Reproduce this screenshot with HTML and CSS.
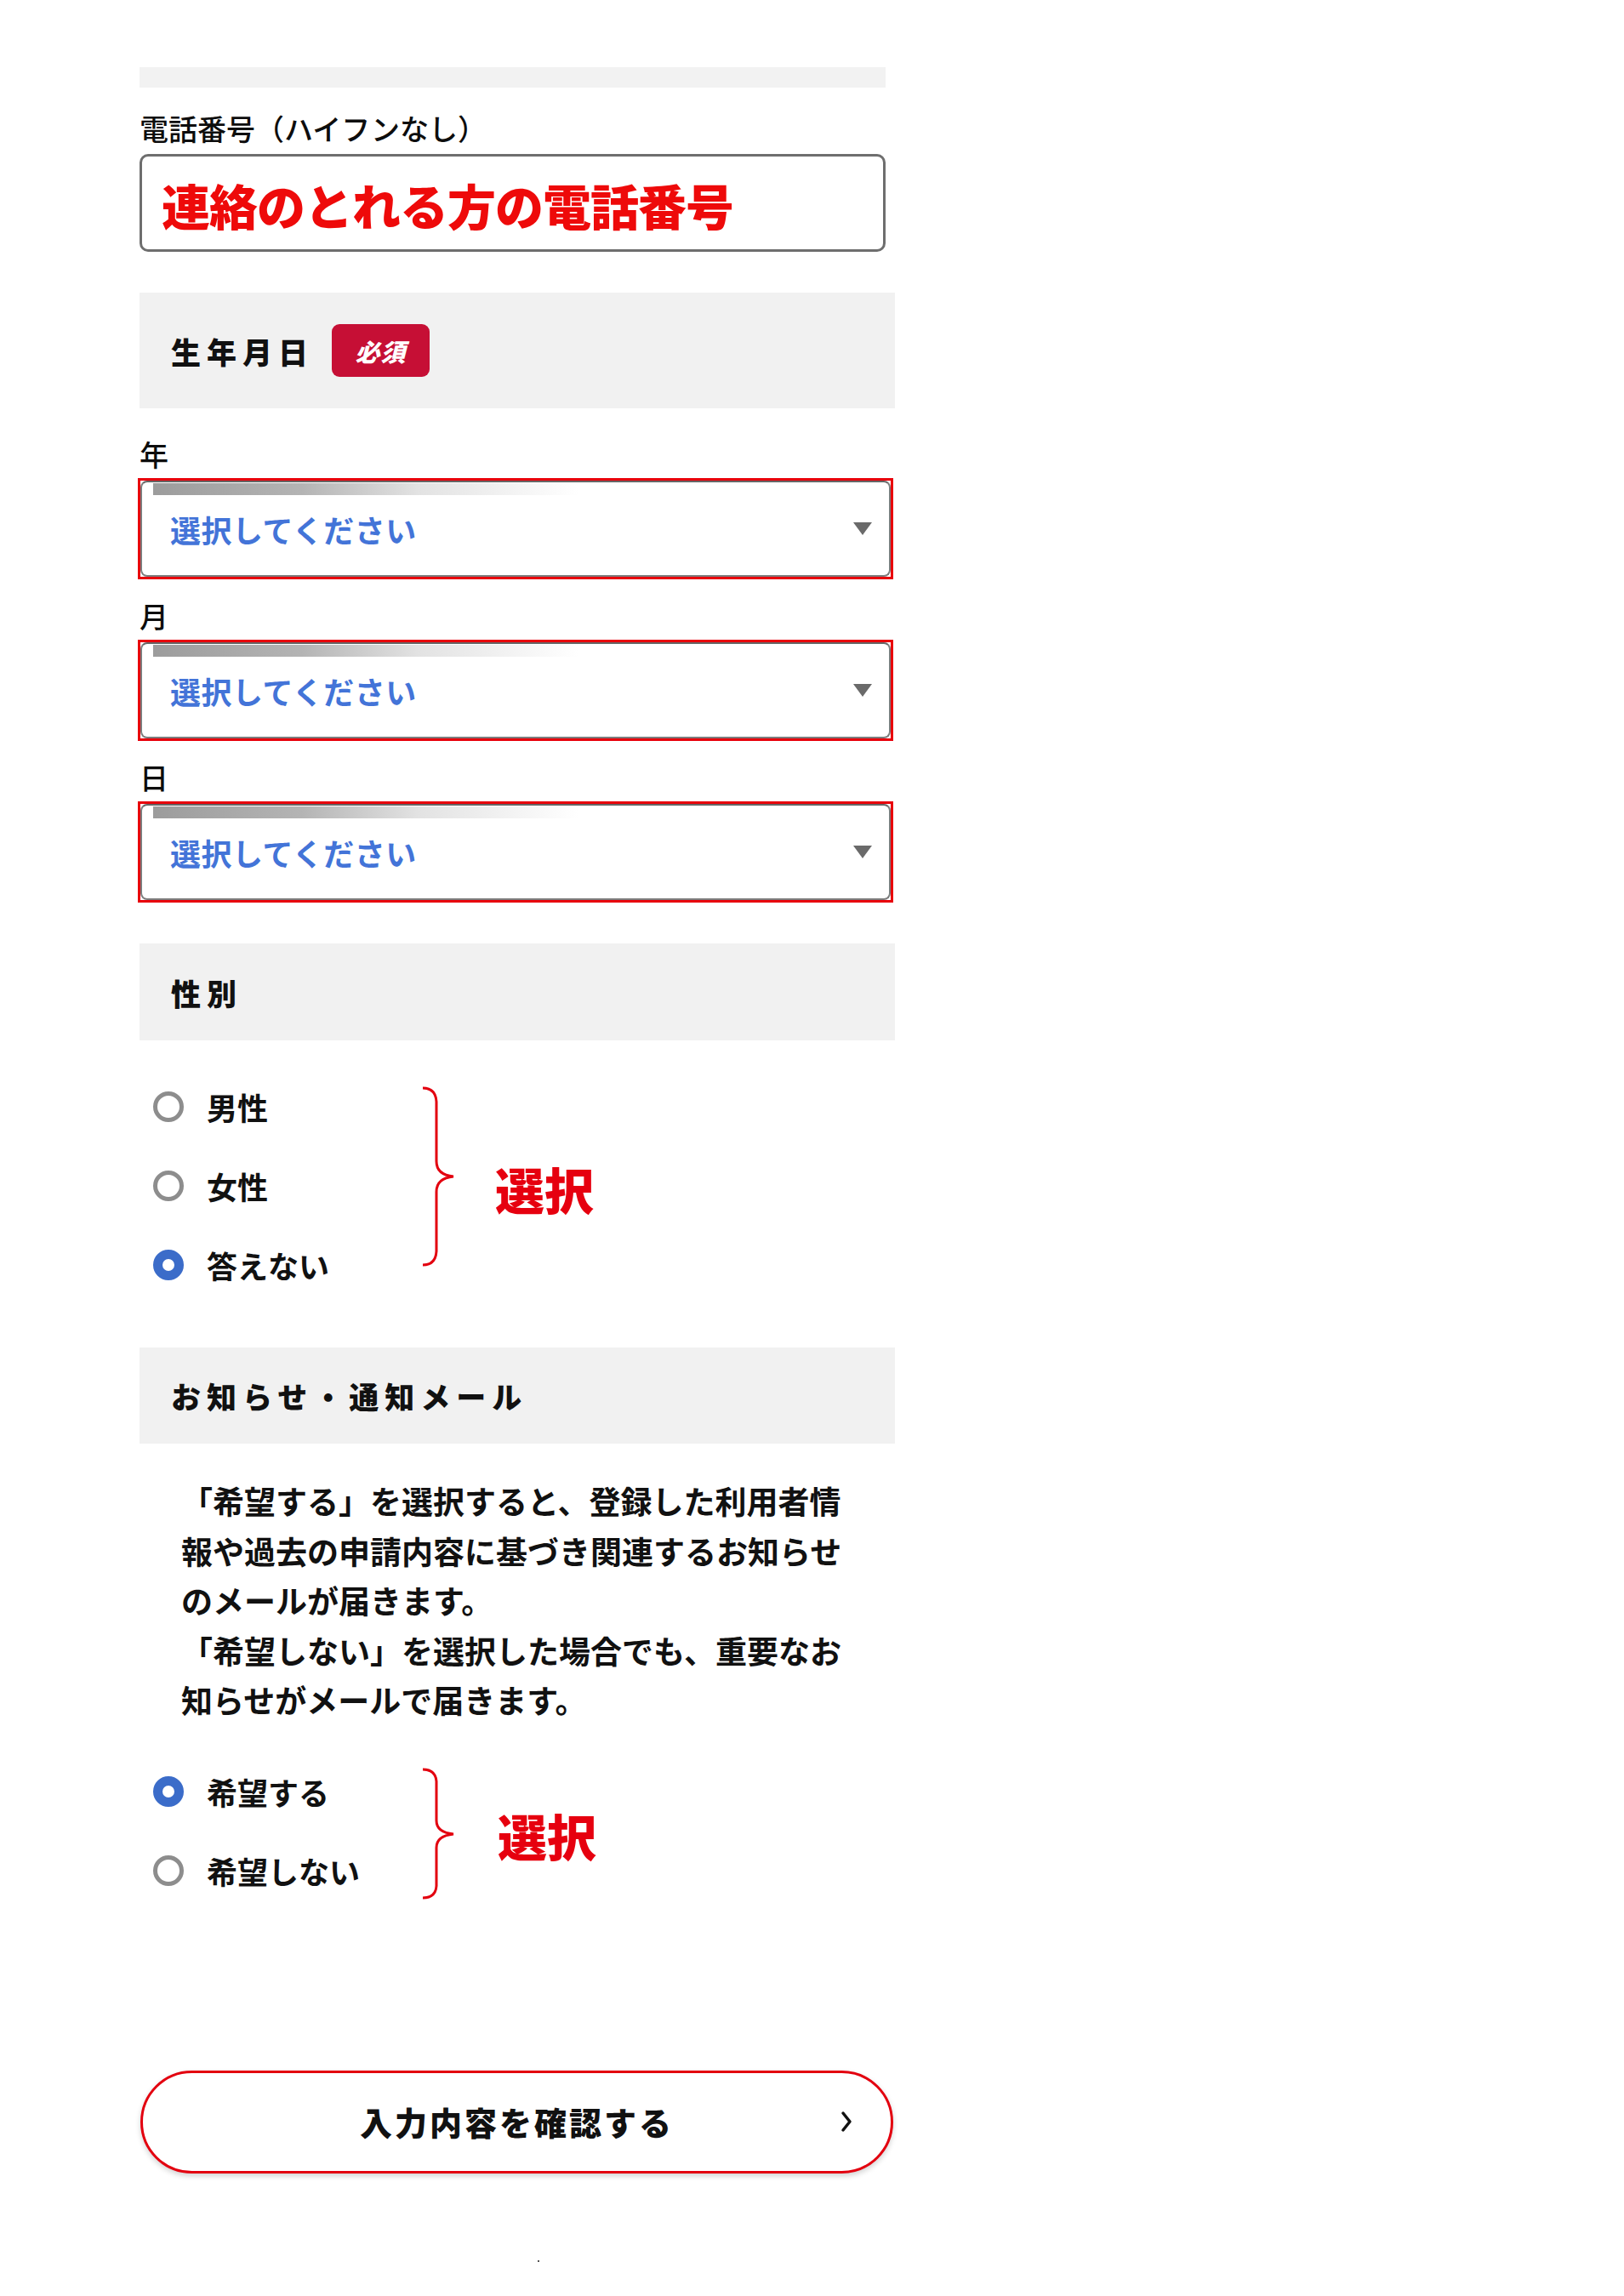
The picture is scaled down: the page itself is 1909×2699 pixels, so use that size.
FILE: index.html
```html
<!DOCTYPE html>
<html lang="ja">
<head>
<meta charset="utf-8">
<title>会員登録</title>
<link rel="stylesheet" href="styles.css">
</head>
<body>
<main class="form">
  <div class="topbar"></div>

  <div class="field-label phone-label">電話番号（ハイフンなし）</div>
  <div class="phone-input"><span class="note-red">連絡のとれる方の電話番号</span></div>

  <div class="section-head head-birth">
    <h2 class="head-title">生年月日</h2>
    <span class="badge">必須</span>
  </div>

  <div class="select-field first">
    <div class="field-label">年</div>
    <div class="select-outline">
      <div class="select">
        <span class="strip"></span>
        <div class="select-row"><span class="placeholder">選択してください</span><span class="arrow"></span></div>
      </div>
    </div>
  </div>
  <div class="select-field">
    <div class="field-label">月</div>
    <div class="select-outline">
      <div class="select">
        <span class="strip"></span>
        <div class="select-row"><span class="placeholder">選択してください</span><span class="arrow"></span></div>
      </div>
    </div>
  </div>
  <div class="select-field">
    <div class="field-label">日</div>
    <div class="select-outline">
      <div class="select">
        <span class="strip"></span>
        <div class="select-row"><span class="placeholder">選択してください</span><span class="arrow"></span></div>
      </div>
    </div>
  </div>

  <div class="section-head head-gender">
    <h2 class="head-title">性別</h2>
  </div>

  <div class="radio-group gender">
    <div class="radio"><span class="circle"></span><span class="radio-text">男性</span></div>
    <div class="radio"><span class="circle"></span><span class="radio-text">女性</span></div>
    <div class="radio"><span class="circle checked"></span><span class="radio-text">答えない</span></div>
    <svg class="brace brace-gender" viewBox="0 0 40 212" preserveAspectRatio="none" aria-hidden="true">
      <path d="M1 2 Q16 2 17 18 L17 88 Q17 104 37 106 Q17 108 17 124 L17 194 Q16 210 1 210" />
    </svg>
    <span class="annot annot-gender">選択</span>
  </div>

  <div class="section-head head-notice">
    <h2 class="head-title">お知らせ・通知メール</h2>
  </div>

  <p class="notice">「希望する」を選択すると、登録した利用者情<br>報や過去の申請内容に基づき関連するお知らせ<br>のメールが届きます。<br>「希望しない」を選択した場合でも、重要なお<br>知らせがメールで届きます。</p>

  <div class="radio-group mail">
    <div class="radio"><span class="circle checked"></span><span class="radio-text">希望する</span></div>
    <div class="radio"><span class="circle"></span><span class="radio-text">希望しない</span></div>
    <svg class="brace brace-mail" viewBox="0 0 40 155" preserveAspectRatio="none" aria-hidden="true">
      <path d="M1 2 Q16 2 17 16 L17 62 Q17 76 37 78 Q17 80 17 94 L17 139 Q16 153 1 153" />
    </svg>
    <span class="annot annot-mail">選択</span>
  </div>

  <button class="confirm" type="button">
    <span class="confirm-spacer"></span>
    <span class="confirm-text">入力内容を確認する</span>
    <svg class="chevron" viewBox="0 0 16 28" aria-hidden="true"><path d="M4 4 L12 14 L4 24" /></svg>
  </button>

  <div class="dot-row"><span class="dot"></span></div>
</main>
</body>
</html>
```

FILE: styles.css
```css
html, body {
  margin: 0;
  padding: 0;
  background: #ffffff;
}

body {
  font-family: "Noto Sans CJK JP", "Noto Sans", sans-serif;
  color: #111111;
}

.form {
  width: 888px;
  margin-left: 164px;
  padding-top: 79px;
  display: flex;
  flex-direction: column;
}

.topbar {
  width: 877px;
  height: 24px;
  background: #f2f2f2;
}

.field-label {
  font-size: 34px;
  line-height: 40px;
  font-weight: 500;
  color: #0d0d0d;
}

.phone-label {
  margin-top: 27px;
  line-height: 41px;
}

.phone-input {
  margin-top: 10px;
  width: 877px;
  height: 115px;
  box-sizing: border-box;
  border: 3px solid #6e6e6e;
  border-radius: 10px;
  display: flex;
  align-items: center;
  padding-left: 23px;
  padding-top: 4px;
}

.note-red {
  font-size: 57px;
  line-height: 1;
  font-weight: 900;
  color: #ee0a0a;
  letter-spacing: -1px;
}

.section-head {
  background: #f1f1f1;
  display: flex;
  align-items: center;
  padding-left: 37px;
  box-sizing: border-box;
}

.head-title {
  margin: 0;
  font-size: 35px;
  line-height: 1;
  font-weight: 900;
  letter-spacing: 7px;
  color: #111;
}

.head-birth {
  margin-top: 48px;
  height: 136px;
}

.badge {
  margin-left: 21px;
  width: 115px;
  height: 62px;
  border-radius: 9px;
  background: #c60f35;
  color: #ffffff;
  font-size: 29px;
  font-weight: 900;
  font-style: italic;
  display: flex;
  align-items: center;
  justify-content: center;
  letter-spacing: 1px;
}

.select-field .field-label {
  margin-top: 23px;
}

.select-field.first .field-label {
  margin-top: 34px;
}

.select-outline {
  margin-top: 8px;
  margin-left: -2px;
  width: 888px;
  height: 119px;
  box-sizing: border-box;
  border: 3px solid #e8000b;
}

.select {
  height: 100%;
  box-sizing: border-box;
  border: 2px solid #7d7d7d;
  border-top-color: #666;
  border-radius: 8px;
  padding: 1px 20px 0 13px;
  display: flex;
  flex-direction: column;
}

.strip {
  display: block;
  width: 500px;
  height: 14px;
  background: linear-gradient(90deg, #9c9c9c 0%, #b4b4b4 35%, #e2e2e2 62%, #ffffff 100%);
}

.select-row {
  margin-top: 18px;
  display: flex;
  align-items: center;
  justify-content: space-between;
  padding-left: 20px;
}

.placeholder {
  font-size: 36px;
  line-height: 44px;
  font-weight: 700;
  color: #4374d8;
  letter-spacing: 0.5px;
}

.arrow {
  width: 0;
  height: 0;
  border-left: 11px solid transparent;
  border-right: 11px solid transparent;
  border-top: 15px solid #6a6a6a;
  margin-top: -2px;
}

.head-gender {
  margin-top: 48px;
  height: 114px;
}

.radio-group {
  position: relative;
  display: flex;
  flex-direction: column;
  padding-left: 16px;
}

.gender {
  margin-top: 31px;
}

.radio {
  height: 93px;
  display: flex;
  align-items: center;
}

.circle {
  width: 36px;
  height: 36px;
  box-sizing: border-box;
  border-radius: 50%;
  border: 5px solid #8d8d8d;
  background: #fff;
  flex: none;
}

.circle.checked {
  border: 11px solid #3b6cc9;
}

.radio-text {
  margin-left: 27px;
  font-size: 36px;
  line-height: 1;
  font-weight: 700;
  color: #111;
}

.brace {
  position: absolute;
  left: 332px;
  width: 40px;
  fill: none;
  stroke: #e3000f;
  stroke-width: 3;
}

.brace-gender {
  top: 23px;
  height: 212px;
}

.brace-mail {
  top: 18px;
  height: 155px;
}

.annot {
  position: absolute;
  font-size: 58px;
  line-height: 1;
  font-weight: 900;
  color: #e6000f;
  letter-spacing: 0;
}

.annot-gender {
  left: 418px;
  top: 114px;
}

.annot-mail {
  left: 421px;
  top: 68px;
}

.head-notice {
  margin-top: 51px;
  height: 113px;
}

.notice {
  margin: 38px 0 0 0;
  padding-left: 49px;
  font-size: 37px;
  line-height: 58.6px;
  font-weight: 700;
  color: #111;
  white-space: nowrap;
}

.mail {
  margin-top: 32px;
}

.confirm {
  margin-top: 188px;
  margin-left: 1px;
  width: 885px;
  height: 121px;
  box-sizing: border-box;
  border: 3px solid #e3000f;
  border-radius: 61px;
  background: #ffffff;
  box-shadow: 0 3px 6px rgba(0, 0, 0, 0.18);
  display: grid;
  grid-template-columns: 1fr auto 1fr;
  align-items: center;
  padding: 0 44px 0 44px;
  font-family: "Noto Sans CJK JP", "Noto Sans", sans-serif;
  cursor: pointer;
}

.confirm-text {
  font-size: 38px;
  line-height: 1;
  font-weight: 900;
  letter-spacing: 3px;
  color: #111;
}

.chevron {
  justify-self: end;
  width: 16px;
  height: 28px;
  fill: none;
  stroke: #111;
  stroke-width: 3.5;
  stroke-linecap: round;
  stroke-linejoin: round;
}

.dot-row {
  margin-top: 102px;
  padding-left: 468px;
}

.dot {
  display: block;
  width: 2px;
  height: 2px;
  background: #555;
}
```
